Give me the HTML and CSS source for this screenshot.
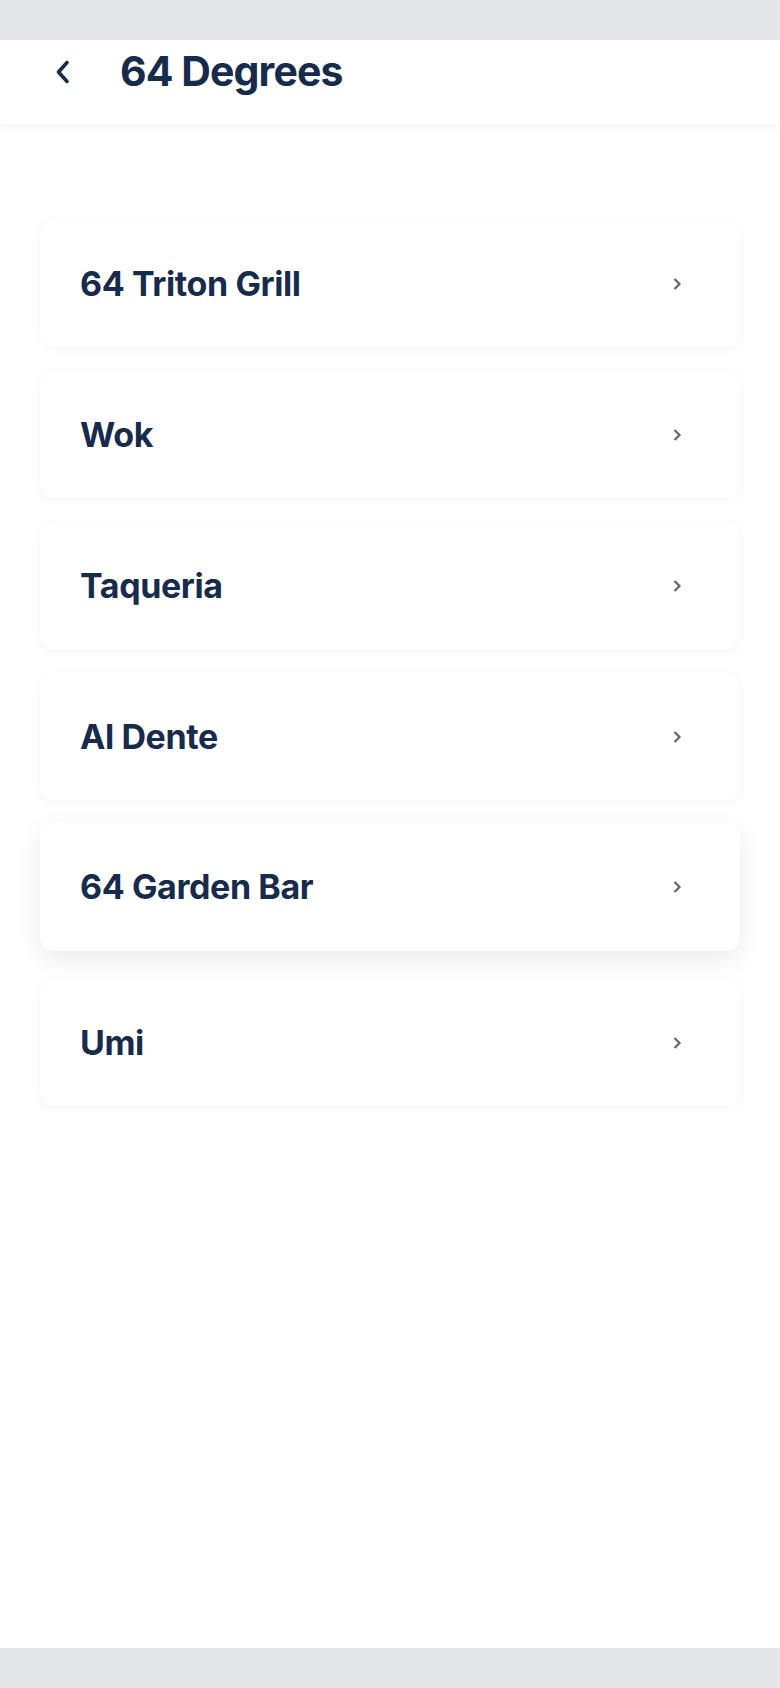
FILE: index.html
```html
<!DOCTYPE html>
<html>
<head>
    <title>64 Degrees</title>
    <link rel="stylesheet" href="styles.css">
</head>
<body>
    <div class="status-bar"></div>

    <div class="header">
        <button class="back-btn" aria-label="Back">
            <svg width="18" height="26" viewBox="0 0 18 26">
                <path d="M13 3.5 L4.5 13 L13 22.5" fill="none" stroke="#172b4d" stroke-width="3.6" stroke-linecap="round" stroke-linejoin="round"/>
            </svg>
        </button>
        <h1 class="title">64 Degrees</h1>
    </div>

    <div class="content">
        <div class="list">
            <a class="card" href="#">
                <span class="card-name">64 Triton Grill</span>
                <svg class="chevron" width="10" height="14" viewBox="0 0 10 14"><path d="M2.5 2 L7.5 7 L2.5 12" fill="none" stroke="#666" stroke-width="2.2"/></svg>
            </a>
            <a class="card" href="#">
                <span class="card-name">Wok</span>
                <svg class="chevron" width="10" height="14" viewBox="0 0 10 14"><path d="M2.5 2 L7.5 7 L2.5 12" fill="none" stroke="#666" stroke-width="2.2"/></svg>
            </a>
            <a class="card" href="#">
                <span class="card-name">Taqueria</span>
                <svg class="chevron" width="10" height="14" viewBox="0 0 10 14"><path d="M2.5 2 L7.5 7 L2.5 12" fill="none" stroke="#666" stroke-width="2.2"/></svg>
            </a>
            <a class="card" href="#">
                <span class="card-name">Al Dente</span>
                <svg class="chevron" width="10" height="14" viewBox="0 0 10 14"><path d="M2.5 2 L7.5 7 L2.5 12" fill="none" stroke="#666" stroke-width="2.2"/></svg>
            </a>
            <a class="card raised" href="#">
                <span class="card-name">64 Garden Bar</span>
                <svg class="chevron" width="10" height="14" viewBox="0 0 10 14"><path d="M2.5 2 L7.5 7 L2.5 12" fill="none" stroke="#666" stroke-width="2.2"/></svg>
            </a>
            <a class="card" href="#">
                <span class="card-name">Umi</span>
                <svg class="chevron" width="10" height="14" viewBox="0 0 10 14"><path d="M2.5 2 L7.5 7 L2.5 12" fill="none" stroke="#666" stroke-width="2.2"/></svg>
            </a>
        </div>
    </div>

    <div class="nav-bar"></div>
</body>
</html>
```

FILE: styles.css
```css
html, body { margin: 0; padding: 0; }
body { font-family: Inter, "Liberation Sans", sans-serif; background: #fff; color: #172b4d; height: 1688px; display: flex; flex-direction: column; }
.status-bar { height: 40px; background: #e5e6ea; flex-shrink: 0; }
.header { height: 84px; box-sizing: border-box; padding-bottom: 22px; display: flex; align-items: center; background: #fff; box-shadow: 0 4px 10px rgba(0,0,0,0.04); position: relative; z-index: 1; }
.back-btn { background: none; border: none; padding: 0; margin: 2px 0 0 54px; width: 18px; height: 26px; display: flex; cursor: pointer; }
.title { margin: 0 0 0 48px; font-size: 41px; font-weight: 700; letter-spacing: -0.9px; color: #172b4d; }
.content { flex: 1; padding: 96px 40px 0; }
.list { display: flex; flex-direction: column; gap: 24px; }
.card { height: 127px; display: flex; align-items: center; justify-content: space-between; padding: 0 58px 0 40px; background: #fff; border-radius: 14px; box-shadow: 0 2px 10px rgba(20,30,60,0.045); text-decoration: none; color: #172b4d; }
.card.raised { height: 129px; margin: -2px 0 4px; box-shadow: 0 8px 24px rgba(20,30,60,0.09); }
.card-name { font-size: 34px; font-weight: 700; letter-spacing: -0.4px; }
.chevron { flex-shrink: 0; }
.nav-bar { height: 40px; background: #e5e6ea; flex-shrink: 0; }
```
